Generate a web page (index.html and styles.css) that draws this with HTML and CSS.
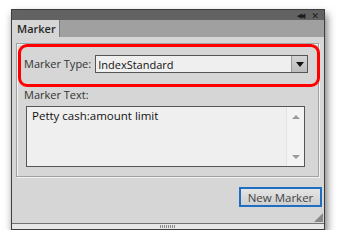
FILE: index.html
```html
<!DOCTYPE html>
<html lang="en">

<head>
	<meta charset="UTF-8">
	<title>Marker</title>
	<link rel="stylesheet" href="styles.css">
</head>

<body>

	<div class="window">
		<div class="titlebar">
			<span class="collapse">&#9664;&#9664;</span>
			<span class="close">&#10005;</span>
		</div>

		<div class="tabstrip">
			<div class="tab">Marker</div>
		</div>

		<div class="content">
			<div class="group">
				<div class="highlight">
					<label class="label" for="type">Marker Type:</label>
					<div class="select" id="type">
						<span class="select-value">IndexStandard</span>
						<span class="select-arrow"></span>
					</div>
				</div>

				<div class="label text-label">Marker Text:</div>
				<div class="textarea">
					<div class="textarea-value">Petty cash:amount limit</div>
					<div class="scrollbar">
						<span class="arrow-up"></span>
						<span class="arrow-down"></span>
					</div>
				</div>
			</div>

			<div class="actions">
				<button class="button">New Marker</button>
			</div>
			<span class="resize-grip"></span>
		</div>

		<div class="bottombar">
			<span class="grip"></span>
		</div>
	</div>

</body>

</html>
```

FILE: styles.css
```css
body {
	margin: 0;
	background-color: #fff;
	font-family: "Open Sans", "DejaVu Sans", sans-serif;
	font-size: 11px;
	color: #333;
}

.window {
	margin: 9px 0 0 11px;
	width: 314px;
	height: 221px;
	box-sizing: border-box;
	border: 1px solid #3e3e3e;
	background-color: #d6d6d6;
	box-shadow: 2px 5px 8px rgba(0, 0, 0, 0.55);
	display: flex;
	flex-direction: column;
}

.titlebar {
	height: 10px;
	background-color: #626262;
	display: flex;
	justify-content: flex-end;
	align-items: center;
	gap: 6px;
	padding-right: 5px;
}

.collapse {
	font-size: 7px;
	letter-spacing: -2px;
	color: #1e1e1e;
	line-height: 1;
	padding-right: 2px;
}

.close {
	font-size: 9px;
	font-weight: bold;
	color: #1e1e1e;
	line-height: 1;
}

.tabstrip {
	height: 17px;
	background-color: #a0a0a0;
	display: flex;
}

.tab {
	width: 42px;
	padding-left: 5px;
	background-color: #d6d6d6;
	border-right: 1px solid #7c7c7c;
	font-weight: 600;
	color: #262626;
	line-height: 17px;
}

.content {
	flex: 1;
	padding: 6px 0 0 4px;
	position: relative;
	display: flex;
	flex-direction: column;
}

.group {
	width: 300px;
	height: 132px;
	border: 1px solid #a2a2a2;
	box-shadow: 1px 1px 0 #f2f2f2, inset 1px 1px 0 #f2f2f2;
	padding: 0 0 0 1px;
}

.highlight {
	height: 29px;
	width: 293px;
	border: 3px solid #ff0000;
	border-radius: 9px;
	display: flex;
	align-items: flex-start;
	padding: 8px 0 0 3px;
}

.label {
	color: #333;
	margin-right: 4px;
	line-height: 18px;
}

.select {
	width: 211px;
	height: 16px;
	border: 1px solid #555;
	background-color: #efefef;
	display: flex;
	align-items: center;
	justify-content: space-between;
}

.select-value {
	padding-left: 2px;
	color: #111;
}

.select-arrow {
	width: 15px;
	height: 16px;
	background: linear-gradient(#d4d4d4, #bdbdbd);
	border-left: 1px solid #999;
	position: relative;
}

.select-arrow::after {
	content: "";
	position: absolute;
	left: 4px;
	top: 6px;
	border-left: 4px solid transparent;
	border-right: 4px solid transparent;
	border-top: 5px solid #111;
}

.text-label {
	margin: 1px 0 0 6px;
	line-height: 14px;
}

.textarea {
	margin: 4px 0 0 8px;
	width: 277px;
	height: 59px;
	border: 1px solid #555;
	background-color: #efefef;
	display: flex;
}

.textarea-value {
	flex: 1;
	padding: 1px 0 0 5px;
	color: #111;
	font-size: 11.5px;
}

.scrollbar {
	width: 18px;
	background-color: #f3f3f3;
	border-left: 1px solid #e2e2e2;
	display: flex;
	flex-direction: column;
	justify-content: space-between;
	align-items: center;
	padding: 8px 0 7px;
	box-sizing: border-box;
}

.arrow-up {
	border-left: 4px solid transparent;
	border-right: 4px solid transparent;
	border-bottom: 4px solid #9a9a9a;
}

.arrow-down {
	border-left: 4px solid transparent;
	border-right: 4px solid transparent;
	border-top: 4px solid #9a9a9a;
}

.actions {
	display: flex;
	justify-content: flex-end;
	padding: 10px 2px 0 0;
}

.button {
	width: 83px;
	height: 20px;
	border: 2px solid #1e6fc2;
	background: linear-gradient(#e4e4e4, #cfcfcf);
	font-family: "Open Sans", "DejaVu Sans", sans-serif;
	font-size: 11.5px;
	color: #444;
	padding: 0;
}

.resize-grip {
	position: absolute;
	right: 1px;
	bottom: 1px;
	width: 9px;
	height: 9px;
	background-image: radial-gradient(#888 0.8px, transparent 1px);
	background-size: 2px 2px;
	clip-path: polygon(100% 0, 100% 100%, 0 100%);
}

.bottombar {
	height: 5px;
	border-top: 1px solid #727272;
	background-color: #e7e7e7;
	display: flex;
	justify-content: center;
}

.grip {
	width: 16px;
	height: 3px;
	margin-top: 1px;
	background-image: repeating-linear-gradient(90deg, #8a8a8a 0 1px, transparent 1px 2px);
}
```
